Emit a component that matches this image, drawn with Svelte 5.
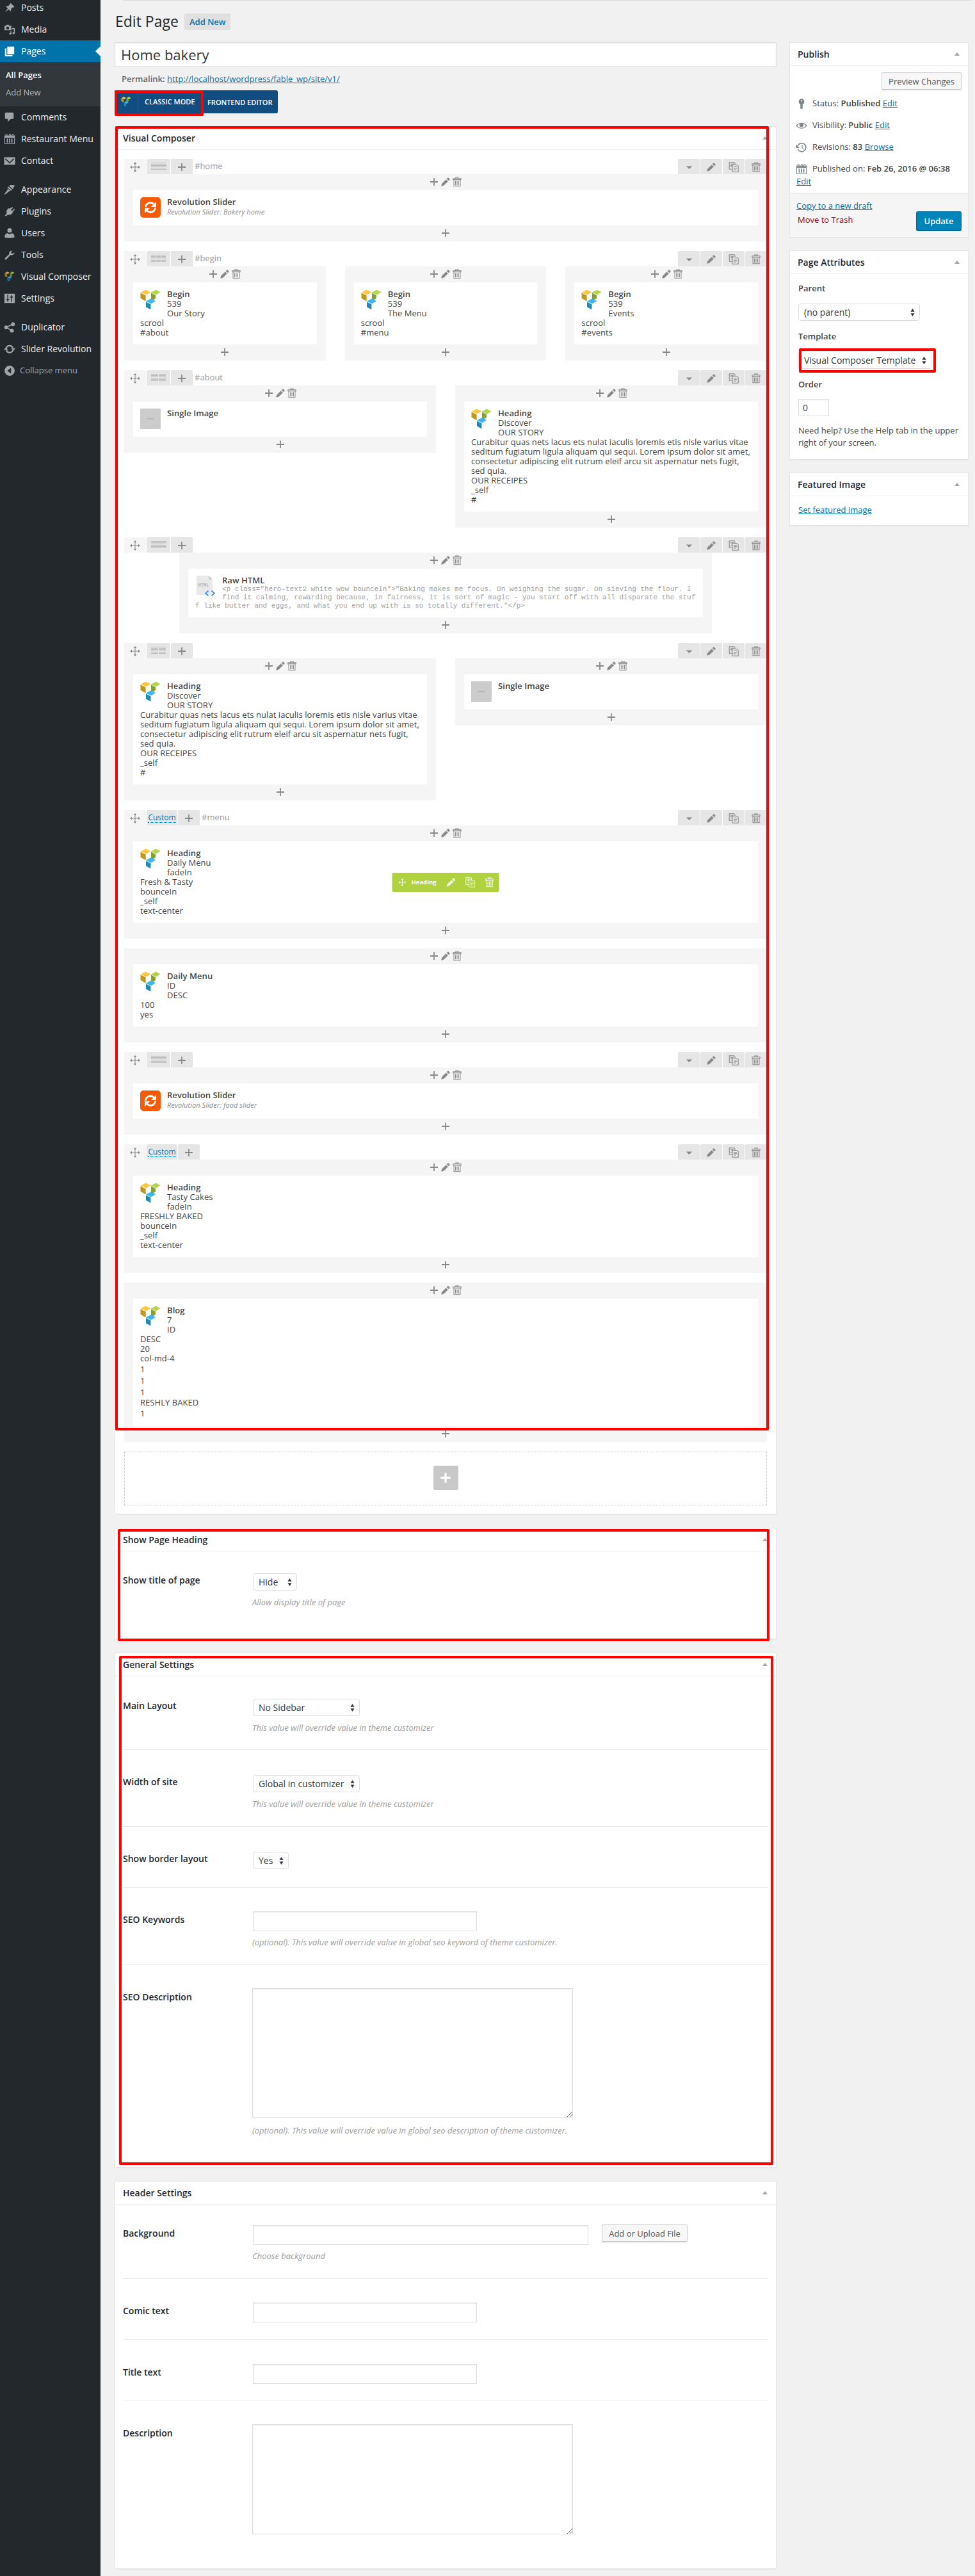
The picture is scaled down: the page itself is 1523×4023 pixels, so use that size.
<script>
  const menu = [
    { icon: 'pin', label: 'Posts' },
    { icon: 'media', label: 'Media' },
    { icon: 'pages', label: 'Pages', active: true, sub: ['All Pages', 'Add New'] },
    { icon: 'comment', label: 'Comments' },
    { icon: 'calendar', label: 'Restaurant Menu' },
    { icon: 'mail', label: 'Contact', last: true },
    { icon: 'brush', label: 'Appearance' },
    { icon: 'plug', label: 'Plugins' },
    { icon: 'user', label: 'Users' },
    { icon: 'wrench', label: 'Tools' },
    { icon: 'vc', label: 'Visual Composer' },
    { icon: 'sliders', label: 'Settings', last: true },
    { icon: 'share', label: 'Duplicator' },
    { icon: 'refresh', label: 'Slider Revolution' },
    { icon: 'collapse', label: 'Collapse menu', dim: true }
  ];

  const story = {
    icon: 'vc', title: 'Heading',
    lines: ['Discover', 'OUR STORY',
      'Curabitur quas nets lacus ets nulat iaculis loremis etis nisle varius vitae',
      'seditum fugiatum ligula aliquam qui sequi. Lorem ipsum dolor sit amet,',
      'consectetur adipiscing elit rutrum eleif arcu sit aspernatur nets fugit,',
      'sed quia.', 'OUR RECEIPES', '_self', '#']
  };
  const image = { icon: 'image', title: 'Single Image' };
  const raw = {
    icon: 'html', title: 'Raw HTML',
    code: [
      '<p class="hero-text2 white wow bounceIn">"Baking makes me focus. On weighing the sugar. On sieving the flour. I',
      'find it calming, rewarding because, in fairness, it is sort of magic - you start off with all disparate the stuf',
      'f like butter and eggs, and what you end up with is so totally different."</p>'
    ]
  };
  const begin = (name, anchor) => ({ icon: 'vc', title: 'Begin', lines: ['539', name, 'scrool', anchor] });

  const rows = [
    { cols: 1, label: '#home', cards: [{ icon: 'rev', title: 'Revolution Slider', note: 'Revolution Slider: Bakery home' }] },
    { cols: 3, label: '#begin', cards: [begin('Our Story', '#about'), begin('The Menu', '#menu'), begin('Events', '#events')] },
    { cols: 2, label: '#about', cards: [image, story] },
    { cols: 1, inset: true, cards: [raw] },
    { cols: 2, cards: [story, image] },
    { custom: true, label: '#menu', cards: [
      { icon: 'vc', title: 'Heading', hover: true, lines: ['Daily Menu', 'fadeIn', 'Fresh & Tasty', 'bounceIn', '_self', 'text-center'] },
      { icon: 'vc', title: 'Daily Menu', lines: ['ID', 'DESC', '100', 'yes'] }
    ] },
    { cols: 1, cards: [{ icon: 'rev', title: 'Revolution Slider', note: 'Revolution Slider: food slider' }] },
    { custom: true, cards: [
      { icon: 'vc', title: 'Heading', lines: ['Tasty Cakes', 'fadeIn', 'FRESHLY BAKED', 'bounceIn', '_self', 'text-center'] },
      { icon: 'vc', title: 'Blog', lines: ['7', 'ID', 'DESC', '20', 'col-md-4', '1', '1', '1', 'RESHLY BAKED', '1'] }
    ] }
  ];

  const override = 'This value will override value in theme customizer';
  const boxes = [
    { title: 'Show Page Heading', mark: 'mark-heading', rows: [
      { label: 'Show title of page', kind: 'select', value: 'Hide', w: 69, hint: 'Allow display title of page', pad: 34, h: 136 }
    ] },
    { title: 'General Settings', mark: 'mark-general', rows: [
      { label: 'Main Layout', kind: 'select', value: 'No Sidebar', w: 167, hint: override, pad: 35, h: 115 },
      { label: 'Width of site', kind: 'select', value: 'Global in customizer', w: 167, hint: override, pad: 39, h: 120 },
      { label: 'Show border layout', kind: 'select', value: 'Yes', w: 56, pad: 39, h: 95 },
      { label: 'SEO Keywords', kind: 'input', w: 350, hint: '(optional). This value will override value in global seo keyword of theme customizer.', pad: 37, h: 121 },
      { label: 'SEO Description', kind: 'area', h2: 202, hint: '(optional). This value will override value in global seo description of theme customizer.', pad: 36, h: 315 }
    ] },
    { title: 'Header Settings', rows: [
      { label: 'Background', kind: 'input', w: 524, button: 'Add or Upload File', hint: 'Choose background', pad: 32, h: 116 },
      { label: 'Comic text', kind: 'input', w: 350, pad: 37, h: 95 },
      { label: 'Title text', kind: 'input', w: 350, pad: 38, h: 96 },
      { label: 'Description', kind: 'area', h2: 172, pad: 36, h: 261 }
    ] }
  ];
</script>

{#snippet vc()}
  <path fill="#fec63d" d="M.8 4.7 8.6.5l7.6 3.7-7.2 4.4z" />
  <path fill="#c0961b" d="M.5 5.5 8.6 9.4v9L.5 13.8z" />
  <path fill="#b3d54a" d="M16.6 4.7 24.4.5l7.2 3.7-7 4.4z" />
  <path fill="#86a22e" d="m17 5.6 7 3.7v4.8l-7 4.2z" />
  <path fill="#3db5ef" d="m9 18.6 7.8-4.4 7.4 3.7-7.2 4.6z" />
  <path fill="#2089b9" d="m9 19.4 7.4 3.9v8.2L9 27.6z" />
{/snippet}

{#snippet icon(name)}
  <svg class="ico" viewBox="0 0 20 20" fill="currentColor" aria-hidden="true">
    {#if name === 'pin'}
      <path d="M10.4 3l1-1c.4 0 7 6 6.700 6.800l-1.200.9-1.300-.2-3.300 3c.6 1.500.4 2.700-.5 3.700L8.500 13 2 18l4.900-6.600L3.600 8c1-.9 2.300-1 3.800-.5l3.200-3.200z" />
    {:else if name === 'media'}
      <path fill-rule="evenodd" d="M1 3.500h2.500L4.500 2h4l1 1.500H13v8H1zM6.700 5a2.400 2.400 0 1 0 0 4.900 2.400 2.400 0 0 0 0-4.900z" />
      <path d="M14 7.500h5v9a2 1.800 0 1 1-1.600-1.600V10H15v0zM11.500 13h1.700v4.200a2 1.600 0 1 1-1.700-1.500z" />
    {:else if name === 'pages'}
      <path d="M6 2h12v13H6zM2 5h2.500v11.500H15V19H2z" />
    {:else if name === 'comment'}
      <path d="M3.500 2h12a1.500 1.500 0 0 1 1.500 1.500v8a1.500 1.500 0 0 1-1.500 1.500H12l-5 5v-5H3.500A1.500 1.500 0 0 1 2 11.500v-8A1.500 1.500 0 0 1 3.500 2z" />
    {:else if name === 'calendar'}
      <path fill-rule="evenodd" d="M1 4h2V1.500h3V4h3V1.500h3V4h2V1.500h3V4h2v15H1zM2.200 8v9.800h15.600V8zM4 2.500V5h1V2.500zm6 0V5h1V2.500zm5 0V5h1V2.500z" />
      <path d="M5 9.500h2v7H5zM9 9.500h2v7H9zM13 9.500h2v7h-2z" />
    {:else if name === 'mail'}
      <path fill-rule="evenodd" d="M.5 4h19v13H.500zM3 5.800l7 6.700 7-6.700 1 1.300-8 7.900-8-7.900z" />
    {:else if name === 'brush'}
      <path d="M9 3.500C12 1 15 2.500 20 3c-3 1.200-2.500 4-4.600 6.300zM7.900 4.600l6.400 5.800-1.900 1.900-6.300-5.900zM6.800 8.200l4.200 4L8 14l-6 4.800L1 17.500l4.800-6z" />
    {:else if name === 'plug'}
      <path d="m13.500 3.500 1.500-1 .8 1.300-3.400 3.700 1.700 1.900 3.700-3.600 1.200.9-.9 1.700-3.100 2.800.6 1c-2.200 3.700-5.500 4.800-8.600 3.500L4 18H1.500l3.700-4.700C3.800 10 5 7.300 8.300 4.500l1 .8z" />
    {:else if name === 'user'}
      <circle cx="10" cy="5.400" r="3.900" />
      <path d="M1.500 17.500c0-5 2-7 5-7.200 2.300 2 4.700 2 7 0 3 .2 5 2.200 5 7.200-5 1.500-12 1.500-17 0z" />
    {:else if name === 'wrench'}
      <path d="M16.700 9.500c-1.600 1.500-3.500 1.400-5.200.7L4.800 17.600c-2 1.900-4.200-.4-2.500-2.300l7-6.500c-.7-2.700 1-6.300 5.600-6.300L12.600 5.300l.8 2.200 2.400.5 2.500-2.300c.5 1.400-.2 2.800-1.600 3.800z" />
    {:else if name === 'sliders'}
      <path fill-rule="evenodd" d="M1 2h18v16H1zm5 2v7.500H4V13h2v2.500h1.500V13h2v-1.500h-2V4zm6.500.5V7h-2v1.500h2V16H14V8.500h2V7h-2V4.500z" />
    {:else if name === 'share'}
      <circle cx="15.800" cy="4.800" r="3.300" /><circle cx="4" cy="10.300" r="3.300" /><circle cx="14" cy="16" r="3.300" />
      <path d="m4 10.300 11.500-5.500M4 10.300 14 16" stroke="currentColor" stroke-width="1.800" />
    {:else if name === 'refresh'}
      <path d="M4.200 8.500A6 6 0 0 1 15.500 8M15.800 12A6 6 0 0 1 4.500 12.500" fill="none" stroke="currentColor" stroke-width="2.400" />
      <path d="M12.500 8.800H20l-3.500 4.500zM7.500 11.600H0L3.500 7z" />
    {:else if name === 'collapse'}
      <path fill-rule="evenodd" d="M10 1.200a8.800 8.800 0 1 0 0 17.600 8.800 8.800 0 0 0 0-17.600zM12.500 5v10L6 10z" />
    {:else if name === 'plus'}
      <path d="M8.900 2.500h2.200v6.400h6.400v2.200h-6.400v6.400H8.900v-6.400H2.500V8.900h6.400z" />
    {:else if name === 'pencil'}
      <path d="m1.500 18.500 1.200-5 8.300-8.300 3.800 3.800-8.300 8.300zM11.900 4.300l2-2.200q1-.9 2 0l2 2q.9 1 0 2l-2.100 2.100z" />
      <path d="m10.900 5.200 3.800 3.800M12.600 3.600l3.800 3.800" stroke="#fff" stroke-opacity=".6" stroke-width=".7" />
    {:else if name === 'trash'}
      <path d="M7.300 3V1.200h5.400V3M2.300 3.400h15.400v2.400H2.300zM3.800 6v12.500h12.400V6M7 8v8.500M10 8v8.500M13 8v8.500" fill="none" stroke="currentColor" stroke-width="1.300" />
    {:else if name === 'copy'}
      <path d="M8 14H1.500V.9h9.500l1.500 1.800V5M7.500 5.500h8.500L19 8v11H7.500zM4 4h6M4 6.800h2.500M4 9.500h2.500M10 9.500h6M10 12.300h6.500M10 15h4.500" fill="none" stroke="currentColor" stroke-width="1.300" />
    {:else if name === 'move'}
      <path d="M10 3v14M3 10h14" stroke="currentColor" stroke-width="1.300" />
      <path d="m10 0 3 3.700H7zM10 20l3-3.700H7zM0 10l3.700-3v6zM20 10l-3.700-3v6z" />
    {:else if name === 'down'}
      <path d="M3.700 8h12.600L10 14z" />
    {:else if name === 'key'}
      <path fill-rule="evenodd" d="M10 1.500a5 5 0 0 1 2 9.500v7l-2.700 1.500L8 18v-7a5 5 0 0 1 2-9.500zM10 3.600a1.200 1.200 0 1 0 0 2.400 1.200 1.200 0 0 0 0-2.400z" />
    {:else if name === 'eye'}
      <path fill-rule="evenodd" d="M.3 10.200C5 3.500 15 3.500 19.700 10.200 15 16.800 5 16.800.300 10.200zm2.100 0c2.500 3 5 3.800 7.600 3.800s5.200-.8 7.600-3.800C15.500 8 14 7.400 13 7c1.900 3.200-.5 5.800-3 5.800S5.100 10.200 7 7c-1 .4-2.600 1-4.600 3.200z" />
      <circle cx="10" cy="9.200" r="2.500" />
    {:else if name === 'history'}
      <path d="M3.600 7.500A7.300 7.300 0 1 1 3.600 13" fill="none" stroke="currentColor" stroke-width="1.800" />
      <path d="M.2 5v6h6.500zM10.500 6h1.300v4.500l3 2.500-.8 1-3.500-3z" />
    {/if}
  </svg>
{/snippet}

{#snippet arrows()}
  <svg class="arrows" viewBox="0 0 7 12" aria-hidden="true"><path d="M3.500 0 6.600 4.800H.4zM3.500 12 .4 7.200h6.200z" /></svg>
{/snippet}

{#snippet tools()}
  <div class="tools">{@render icon('plus')}{@render icon('pencil')}{@render icon('trash')}</div>
{/snippet}

<div class="page">
  <nav>
    {#each menu as m}
      <a class="item" class:active={m.active} class:last={m.last} class:dim={m.dim}>
        {#if m.icon === 'vc'}
          <svg class="ico vcmini" viewBox="0 0 32 32">{@render vc()}</svg>
        {:else}{@render icon(m.icon)}{/if}
        <span>{m.label}</span>
      </a>
      {#if m.sub}
        <div class="sub">
          {#each m.sub as s, i}<a class:current={i === 0}>{s}</a>{/each}
        </div>
      {/if}
    {/each}
  </nav>

  <div class="body">
    <div class="topline"></div>
    <div class="columns">
      <main>
        <header><h1>Edit Page</h1><a class="addnew">Add New</a></header>
        <div class="title">Home bakery</div>
        <p class="permalink"><b>Permalink:</b> <a class="link">http://localhost/wordpress/fable_wp/site/v1/</a></p>
        <div class="modes">
          <svg class="logo" viewBox="0 0 32 32">{@render vc()}</svg>
          <span class="classic">CLASSIC MODE</span><span class="front">FRONTEND EDITOR</span>
          <i class="mark mark-mode"></i>
        </div>

        <section class="box composer">
          <h2>Visual Composer<i class="tri"></i></h2>
          <div class="rows">
            {#each rows as r}
              <div class="controls">
                <span class="tab light">{@render icon('move')}</span>
                {#if r.custom}
                  <span class="tab custom"><a>Custom</a></span>
                {:else}
                  <span class="tab wide">
                    <svg class="layout" viewBox="0 0 24 12">
                      {#each [0, 1, 2, 3, 4, 5] as y}
                        {#each Array(r.cols) as _, x}
                          <rect x={x * (24 / r.cols)} y={y * 2} width={24 / r.cols - (r.cols > 1 ? 1 : 0)} height="1" />
                        {/each}
                      {/each}
                    </svg>
                  </span>
                {/if}
                <span class="tab">{@render icon('plus')}</span>
                <span class="label">{r.label ?? ''}</span>
                <span class="tab small">{@render icon('down')}</span>
                <span class="tab">{@render icon('pencil')}</span>
                <span class="tab">{@render icon('copy')}</span>
                <span class="tab">{@render icon('trash')}</span>
              </div>
              <div class="cols" class:stack={r.custom} class:inset={r.inset}>
                {#each r.cards as c}
                  <div class="col">
                    {@render tools()}
                    <article>
                      {#if c.icon === 'vc'}
                        <svg class="pic" viewBox="0 0 32 32">{@render vc()}</svg>
                      {:else if c.icon === 'rev'}
                        <svg class="pic" viewBox="0 0 32 32">
                          <rect width="32" height="32" rx="5" fill="#fa5a05" />
                          <g fill="none" stroke="#fff" stroke-width="2.800"><path d="M8.500 15.500a7.300 7.300 0 0 1 12.500-4.700M23.500 16.500A7.300 7.300 0 0 1 11 21.200" /></g>
                          <path fill="#fff" d="M25 7v8h-8zM7 25v-8h8z" />
                        </svg>
                      {:else if c.icon === 'image'}
                        <svg class="pic" viewBox="0 0 32 32"><rect width="32" height="32" fill="#ccc" /><path d="M11 15h10v2H11z" fill="#b5b5b5" /></svg>
                      {:else}
                        <svg class="pic" viewBox="0 0 32 32">
                          <path fill="#e9e9e9" d="M4 0h17l6 6v22q0 2-2 2H4q-2 0-2-2V2q0-2 2-2z" /><path fill="#ccc" d="M21 0v6h6z" />
                          <text x="4.500" y="16.500">HTML</text>
                          <path d="m20.500 23.500-4.500 4 4.500 4M25.500 23.500l4.500 4-4.500 4" fill="none" stroke="#3d94f6" stroke-width="1.800" />
                        </svg>
                      {/if}
                      <h3>{c.title}</h3>
                      {#if c.note}<em>{c.note}</em>{/if}
                      {#each c.lines ?? [] as l}
                        <p class:tall={l === '1'}>{l}</p>
                      {/each}
                      {#each c.code ?? [] as l}<code>{l}</code>{/each}
                      {#if c.hover}
                        <div class="hover">{@render icon('move')}<b>Heading</b>{@render icon('pencil')}{@render icon('copy')}{@render icon('trash')}</div>
                      {/if}
                    </article>
                    <div class="tools">{@render icon('plus')}</div>
                  </div>
                {/each}
              </div>
            {/each}
            <div class="drop"><span>{@render icon('plus')}</span></div>
          </div>
          <i class="mark mark-composer"></i>
        </section>

        {#each boxes as b}
          <section class="box">
            <h2>{b.title}<i class="tri"></i></h2>
            {#each b.rows as f}
              <div class="field field-{f.kind}" style="height:{f.h}px;padding-top:{f.pad}px">
                <label>{f.label}</label>
                <div class="control">
                  <div class="line">
                    {#if f.kind === 'select'}
                      <span class="select" style="width:{f.w}px">{f.value}{@render arrows()}</span>
                    {:else if f.kind === 'input'}
                      <span class="text" style="width:{f.w}px"></span>
                    {:else}
                      <span class="textarea" style="height:{f.h2}px"><svg viewBox="0 0 9 9"><path d="M1 9 9 1M5 9l4-4" stroke="#666" /></svg></span>
                    {/if}
                    {#if f.button}<span class="button">{f.button}</span>{/if}
                  </div>
                  {#if f.hint}<em>{f.hint}</em>{/if}
                </div>
              </div>
            {/each}
            {#if b.mark}<i class="mark {b.mark}"></i>{/if}
          </section>
        {/each}
      </main>

      <aside>
        <section class="box publish">
          <h2>Publish<i class="tri"></i></h2>
          <div class="preview"><span class="button">Preview Changes</span></div>
          <div class="misc">{@render icon('key')}<span>Status: <b>Published</b> <a class="link">Edit</a></span></div>
          <div class="misc">{@render icon('eye')}<span>Visibility: <b>Public</b> <a class="link">Edit</a></span></div>
          <div class="misc">{@render icon('history')}<span>Revisions: <b>83</b> <a class="link">Browse</a></span></div>
          <div class="misc">{@render icon('calendar')}<span>Published on: <b>Feb 26, 2016 @ 06:38</b></span></div>
          <div class="edit"><a class="link">Edit</a></div>
          <div class="major">
            <div><a class="link">Copy to a new draft</a><a class="trash">Move to Trash</a></div>
            <span class="update">Update</span>
          </div>
        </section>
        <section class="box attrs">
          <h2>Page Attributes<i class="tri"></i></h2>
          <div class="pad">
            <b>Parent</b>
            <span class="select parent">(no parent){@render arrows()}</span>
            <b>Template</b>
            <span class="select template">Visual Composer Template{@render arrows()}<i class="mark mark-template"></i></span>
            <b>Order</b>
            <span class="text order">0</span>
            <p>Need help? Use the Help tab in the upper right of your screen.</p>
          </div>
        </section>
        <section class="box featured">
          <h2>Featured Image<i class="tri"></i></h2>
          <div class="pad"><a class="link">Set featured image</a></div>
        </section>
      </aside>
    </div>
  </div>
</div>

<style>
  :global(body) { margin: 0; background: #f1f1f1; }
  .page { display: flex; height: 4023px; width: 1523px; overflow: hidden; background: #f1f1f1; color: #444; font: 13px/15px 'Open Sans', sans-serif; }
  .page * { box-sizing: border-box; }
  h1, h2, h3, p { margin: 0; font-weight: 400; }
  b { font-weight: 600; }
  svg { display: block; flex: none; }
  .ico { width: 20px; height: 20px; }
  .link { color: #0073aa; text-decoration: underline; }

  nav { width: 157px; flex: none; background: #23282d; }
  .item { display: flex; align-items: center; height: 34px; padding: 0 0 1px 5px; gap: 8px; color: #eee; font-size: 14px; white-space: nowrap; position: relative; }
  .item:first-child { margin-top: -5px; }
  .item .ico { color: #a0a5aa; width: 18px; height: 18px; margin: 0 1px; }
  .item .vcmini { width: 16px; height: 16px; margin: 0 2px; opacity: .75; }
  .item.last { margin-bottom: 11px; }
  .item.active { background: #0073aa; color: #fff; }
  .item.active .ico { color: #fff; }
  .item.active::after { content: ''; position: absolute; right: 0; top: 9px; border: 8px solid transparent; border-left: 0; border-right-color: #f1f1f1; }
  .item.dim { color: #a0a5aa; font-size: 13px; gap: 6px; }
  .sub { background: #32373c; height: 69px; padding: 7px 9px; font-size: 13px; line-height: 27px; }
  .sub a { display: block; color: #b4b9be; }
  .sub .current { color: #fff; font-weight: 600; }

  .body { flex: 1; }
  .topline { height: 1px; margin: 0 5px 0 35px; background: #ddd; }
  .columns { display: flex; gap: 20px; padding-left: 22px; }
  main { width: 1034px; }
  header { height: 65px; display: flex; align-items: center; gap: 10px; }
  h1 { font-size: 23px; line-height: 27px; color: #23282d; width: 99px; white-space: nowrap; padding-left: 1px; margin-top: -1px; }
  .addnew { height: 26px; padding: 0 8px; background: #e0e0e0; border-radius: 2px; color: #0073aa; font-weight: 600; line-height: 26px; }
  .title { height: 38px; border: 1px solid #ddd; background: #fff; box-shadow: inset 0 1px 2px rgba(0,0,0,.07); font-size: 22px; line-height: 36px; padding-left: 9px; color: #32373c; }
  .permalink { height: 37px; line-height: 39px; padding-left: 11px; white-space: nowrap; }
  .permalink b { color: #666; }
  .modes { position: relative; display: flex; align-items: center; width: 255px; height: 36px; background: #114d80; border-radius: 3px; color: #fff; font-size: 11px; font-weight: 600; white-space: nowrap; }
  .logo { width: 16px; height: 16px; margin: 0 10px; }
  .classic { line-height: 36px; border-left: 1px solid #2a608f; padding: 0 11px 0 10px; width: 109px; }

  .mark { position: absolute; border: 4px solid #f00; border-radius: 2px; pointer-events: none; z-index: 3; }
  .mark-mode { left: 0; top: 0; width: 139px; height: 40px; }
  .mark-composer { left: 0; top: -1px; width: 1021px; height: 2037px; }
  .mark-heading { left: 4px; top: 1px; width: 1018px; height: 175px; }
  .mark-general { left: 6px; top: 4px; width: 1022px; height: 795px; }
  .mark-template { left: 0; top: -6px; width: 214px; height: 38px; }

  .box { position: relative; background: #fff; border: 1px solid #e5e5e5; box-shadow: 0 1px 1px rgba(0,0,0,.04); }
  h2 { height: 36px; border-bottom: 1px solid #eee; padding: 0 12px; font-size: 14px; font-weight: 600; line-height: 36px; color: #23282d; display: flex; justify-content: space-between; align-items: center; white-space: nowrap; }
  .tri { border: 4px solid transparent; border-top: 0; border-bottom: 5px solid #a0a5aa; margin-right: 1px; }
  main .box { margin-bottom: 21px; }
  .composer { margin-top: 20px; height: 2168px; }

  .rows { padding: 14px 14px 0; }
  .controls { display: flex; gap: 1px; height: 24px; }
  .tab { width: 34px; height: 24px; background: #e6e6e6; border-radius: 2px 2px 0 0; display: flex; align-items: center; justify-content: center; color: #888; }
  .tab.light { background: #f5f5f5; }
  .tab.wide { width: 37px; }
  .tab.custom { width: 48px; }
  .tab.custom a { color: #0073aa; font-size: 12px; line-height: 14px; border-bottom: 1px dotted #0073aa; }
  .tab .ico { width: 16px; height: 16px; margin-top: 1px; }
  .tab.small .ico { width: 15px; }
  .layout { width: 24px; height: 12px; fill: #bbb; }
  .label { flex: 1; padding-left: 2px; line-height: 23px; color: #999; }
  .cols { display: flex; gap: 30px; align-items: flex-start; margin-bottom: 15px; }
  .cols.stack { flex-direction: column; gap: 15px; }
  .cols.inset { padding: 0 86px; }
  .col { flex: 1; width: 100%; background: #f5f5f5; padding: 0 14px; }
  .stack .col { flex: none; }
  .tools { height: 25px; display: flex; justify-content: center; align-items: center; gap: 2px; color: #888; }
  .tools .ico { width: 16px; height: 16px; margin-top: -2px; }
  article { position: relative; background: #fff; border-radius: 2px; padding: 11px; min-height: 55px; white-space: nowrap; letter-spacing: .06px; }
  .pic { float: left; width: 32px; height: 32px; margin: 0 10px 5px 0; }
  .pic text { font: bold 7px 'Liberation Mono', monospace; fill: #b0b0b0; }
  h3 { font-size: 13px; font-weight: 600; line-height: 15px; color: #444; }
  article p { line-height: 15px; }
  article p.tall { line-height: 18px; }
  article em { display: block; font-size: 11px; line-height: 16px; color: #8c8c8c; }
  code { display: block; font: 11px/13px 'Liberation Mono', monospace; letter-spacing: 0; color: #a0a0a0; }
  .hover { position: absolute; left: 50%; top: 50%; transform: translate(-50%, -50%); width: 167px; height: 30px; border-radius: 2px; background: #b0d23f; color: #fff; display: flex; align-items: center; gap: 14px; padding-left: 10px; font-size: 9.500px; letter-spacing: 0; }
  .hover .ico { width: 16px; height: 16px; opacity: .85; }
  .hover .ico:first-child { width: 12px; height: 12px; opacity: 1; margin-right: -6px; }
  .hover b { flex: none; font-weight: 700; width: 40px; }
  .drop { height: 84px; border: 1px dashed #ccc; display: flex; align-items: center; justify-content: center; padding-bottom: 3px; }
  .drop span { width: 39px; height: 38px; border-radius: 3px; background: #c8c8c8; color: #fff; display: flex; align-items: center; justify-content: center; }
  .drop .ico { width: 20px; height: 20px; stroke: #fff; stroke-width: 1; }

  .field { display: flex; margin: 0 12px; border-bottom: 1px solid #e9e9e9; }
  .field:last-of-type { border-bottom: 0; }
  .field label { width: 202px; font-size: 14px; font-weight: 600; line-height: 20px; color: #23282d; padding-top: 1px; }
  .field-input label { padding-top: 3px; }
  .field-area label { padding-top: 4px; }
  .line { display: flex; padding-left: 1px; }
  .field-area .line { padding-left: 0; }
  .field em { display: block; margin-top: 8px; font-size: 13px; line-height: 18px; color: #9c9c9c; white-space: nowrap; }
  .field-select em { margin-top: 9px; }
  .field-area em { margin-top: 11px; }
  .select { position: relative; display: flex; align-items: center; justify-content: space-between; height: 27px; border: 1px solid #ddd; border-radius: 4px; background: #fff; padding: 0 7px 0 8px; font-size: 14px; color: #32373c; white-space: nowrap; }
  .arrows { width: 7px; height: 12px; fill: #32373c; }
  .text { height: 31px; border: 1px solid #ddd; background: #fff; box-shadow: inset 0 1px 2px rgba(0,0,0,.07); }
  .textarea { width: 501px; border: 1px solid #ddd; box-shadow: inset 0 1px 2px rgba(0,0,0,.07); display: flex; align-items: flex-end; justify-content: flex-end; }
  .textarea svg { width: 9px; height: 9px; }
  .button { height: 28px; border: 1px solid #ccc; border-bottom-width: 2px; border-radius: 3px; background: #f7f7f7; color: #555; line-height: 26px; padding: 0 10px; white-space: nowrap; }
  .line .button { margin: -1px 0 0 21px; width: 134px; text-align: center; padding: 0; }

  aside { width: 280px; padding-top: 65px; }
  aside .box { margin-bottom: 20px; }
  .publish { height: 305px; }
  .preview { display: flex; justify-content: flex-end; padding: 10px 10px 0; height: 42px; }
  .preview .button { width: 125px; padding: 0; text-align: center; }
  .misc { display: flex; align-items: center; height: 34px; padding: 0 0 1px 9px; gap: 8px; white-space: nowrap; }
  .misc .ico { color: #82878c; width: 18px; height: 18px; }
  .edit { height: 19px; padding-left: 10px; margin-top: -5px; line-height: 15px; }
  .major { display: flex; justify-content: space-between; border-top: 1px solid #ddd; background: #f5f5f5; height: 69px; padding: 11px 10px 0; margin-top: 6px; }
  .major a { display: block; line-height: 17px; }
  .major .trash { color: #a00; padding: 5px 0 0 2px; }
  .update { width: 71px; height: 31px; margin-top: 17px; border: 1px solid #006799; border-bottom-width: 2px; border-radius: 3px; background: #0085ba; color: #fff; font-weight: 600; line-height: 28px; text-align: center; }
  .attrs { height: 327px; }
  .featured { height: 83px; }
  .pad { padding: 14px 13px; }
  .attrs .pad { display: flex; flex-direction: column; align-items: flex-start; }
  .attrs .pad b { line-height: 16px; }
  .attrs .select { margin: 16px 0; }
  .parent { width: 190px; }
  .template { width: 208px; }
  .attrs .order { width: 48px; height: 27px; padding-left: 6px; font-size: 14px; line-height: 25px; margin: 15px 0 13px; }
  .attrs p { line-height: 19px; }
</style>
